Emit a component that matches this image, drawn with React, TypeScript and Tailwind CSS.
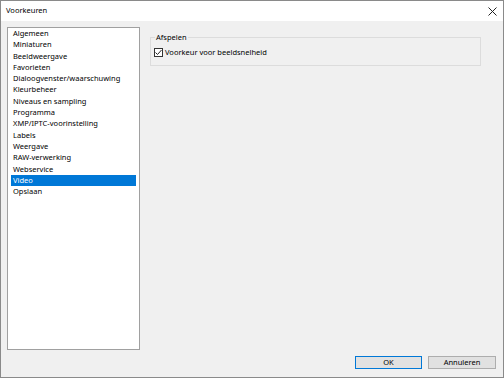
import { useState } from 'react';

const items = [
  'Algemeen',
  'Miniaturen',
  'Beeldweergave',
  'Favorieten',
  'Dialoogvenster/waarschuwing',
  'Kleurbeheer',
  'Niveaus en sampling',
  'Programma',
  'XMP/IPTC-voorinstelling',
  'Labels',
  'Weergave',
  'RAW-verwerking',
  'Webservice',
  'Video',
  'Opslaan',
];

export default function App() {
  const [selected, setSelected] = useState('Video');
  const [fps, setFps] = useState(true);

  return (
    <div
      className="w-[504px] h-[378px] bg-[#f0f0f0] border border-[#8a8a8a] flex flex-col text-[7.5px] text-black"
      style={{ fontFamily: '"Noto Sans", "Open Sans", sans-serif' }}
    >
      {/* Title bar */}
      <div className="h-[20px] bg-white flex items-center justify-between pl-[5px] pr-[5px]">
        <span>Voorkeuren</span>
        <svg width="9" height="9" viewBox="0 0 9 9" className="mr-[1px]">
          <path d="M0.5 0.5 L8.5 8.5 M8.5 0.5 L0.5 8.5" stroke="#222" strokeWidth="1" />
        </svg>
      </div>

      {/* Body */}
      <div className="flex-1 flex flex-col pl-[6px] pr-[6px] pt-[6px]">
        <div className="flex gap-[10px]">
          {/* Category list */}
          <div className="w-[133px] h-[323px] bg-white border border-[#a0a0a0] px-[3px]">
            {items.map((item) => (
              <div
                key={item}
                onClick={() => setSelected(item)}
                className={
                  'h-[11.3px] leading-[11.3px] pl-[2px] whitespace-nowrap cursor-default ' +
                  (item === selected ? 'bg-[#0078d7] text-white' : '')
                }
              >
                {item}
              </div>
            ))}
          </div>

          {/* Settings panel */}
          <div className="flex-1 pt-[10px] pr-[16px]">
            <div className="relative border border-[#dcdcdc] h-[29px] pl-[3px] pt-[9px]">
              <span className="absolute left-[4px] top-[-6px] bg-[#f0f0f0] px-[1px] leading-[11px]">
                Afspelen
              </span>
              <label className="flex items-center gap-[2px] leading-[11px]">
                <span
                  onClick={() => setFps(!fps)}
                  className="w-[9px] h-[9px] border border-[#333] bg-white flex items-center justify-center"
                >
                  {fps && (
                    <svg width="7" height="7" viewBox="0 0 7 7">
                      <path d="M0.5 3.5 L2.5 5.5 L6.5 1" stroke="#222" strokeWidth="1" fill="none" />
                    </svg>
                  )}
                </span>
                <span>Voorkeur voor beeldsnelheid</span>
              </label>
            </div>
          </div>
        </div>

        {/* Buttons */}
        <div className="flex justify-end gap-[6px] mt-[6px] pr-[1px]">
          <button className="w-[67px] h-[13px] bg-[#e1e1e1] border border-[#0078d7] leading-[11px]">OK</button>
          <button className="w-[68px] h-[13px] bg-[#e1e1e1] border border-[#adadad] leading-[11px]">Annuleren</button>
        </div>
      </div>
    </div>
  );
}
